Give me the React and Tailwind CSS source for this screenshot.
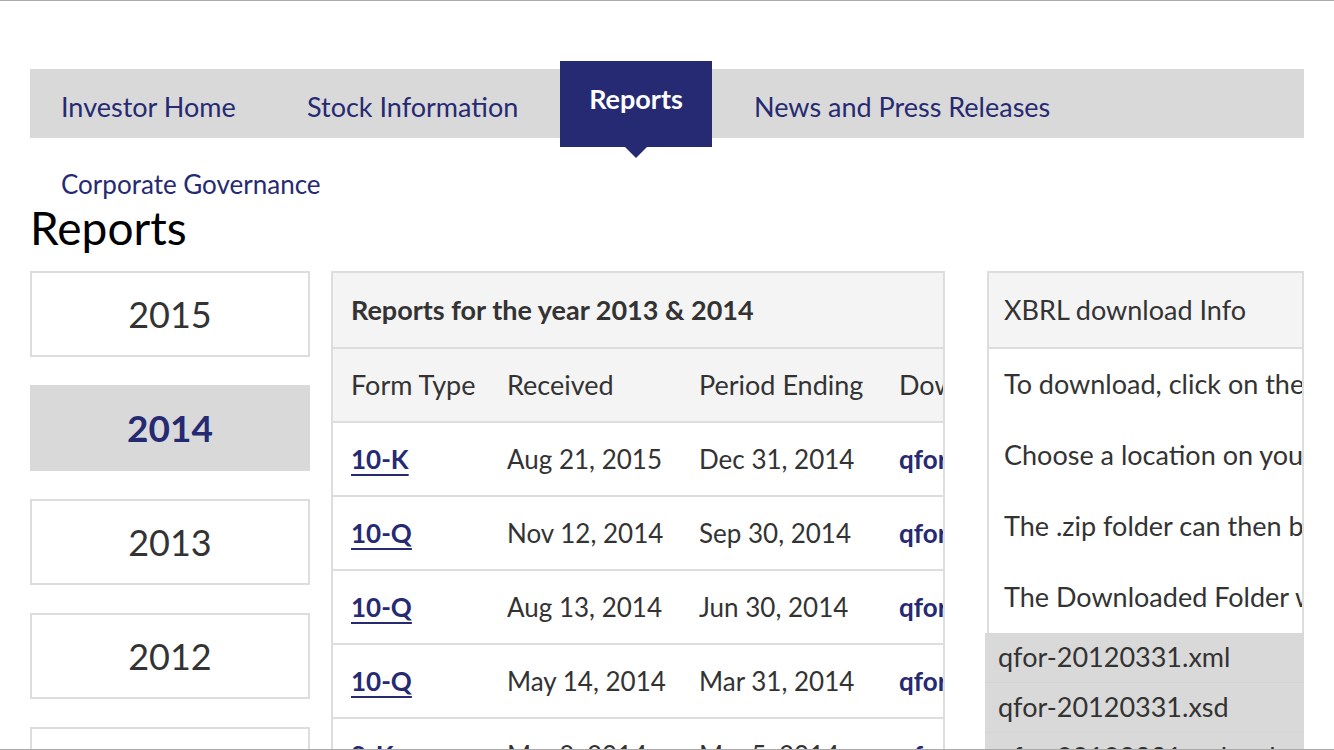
export default function App() {
  const years = ["2015", "2014", "2013", "2012", "2011"];
  const rows = [
    ["10-K", "Aug 21, 2015", "Dec 31, 2014", "qform10k.pdf"],
    ["10-Q", "Nov 12, 2014", "Sep 30, 2014", "qform10q.pdf"],
    ["10-Q", "Aug 13, 2014", "Jun 30, 2014", "qform10q.pdf"],
    ["10-Q", "May 14, 2014", "Mar 31, 2014", "qform10q.pdf"],
    ["8-K", "Mar 8, 2014", "Mar 5, 2014", "qform8k.pdf"],
  ];
  const info = [
    "To download, click on the file name.",
    "Choose a location on your computer.",
    "The .zip folder can then be extracted.",
    "The Downloaded Folder will contain:",
  ];
  const files = ["qfor-20120331.xml", "qfor-20120331.xsd", "qfor-20120331_cal.xml"];

  return (
    <div className="w-[1334px] h-[750px] overflow-hidden bg-white border-t border-b border-[#aaaaaa] text-[#333333] font-['Lato',sans-serif]">
      <div className="px-[30px]">
        {/* nav */}
        <div className="mt-[68px] h-[69px] bg-[#d9d9d9] flex items-start">
          <div className="w-[246px] pl-[31px] pt-[7px] h-[69px] flex items-center text-[27px] text-[#262a72] whitespace-nowrap">
            Investor Home
          </div>
          <div className="w-[284px] pl-[31px] pt-[7px] h-[69px] flex items-center text-[27px] text-[#262a72] whitespace-nowrap">
            Stock Information
          </div>
          <div className="relative -mt-[8px] w-[152px] h-[86px] bg-[#262a72] flex items-center justify-center pb-[10px] text-[27px] font-bold text-white">
            Reports
            <div className="absolute left-[65px] -bottom-[11px] w-0 h-0 border-l-[11px] border-r-[11px] border-t-[11px] border-l-transparent border-r-transparent border-t-[#262a72]"></div>
          </div>
          <div className="pl-[42px] pt-[7px] h-[69px] flex items-center text-[27px] text-[#262a72] whitespace-nowrap">
            News and Press Releases
          </div>
        </div>

        <div className="mt-[31px] pl-[31px] h-[30px] leading-[30px] text-[26px] text-[#262a72]">
          Corporate Governance
        </div>
        <h1 className="mt-[5px] h-[48px] leading-[48px] text-[46px] text-black">Reports</h1>

        <div className="mt-[19px] flex items-start">
          {/* years */}
          <div className="w-[280px] flex flex-col gap-[28px]">
            {years.map((y) =>
              y === "2014" ? (
                <div key={y} className="h-[86px] bg-[#d9d9d9] flex items-center justify-center text-[37px] font-bold text-[#262a72]">
                  {y}
                </div>
              ) : (
                <div key={y} className="h-[86px] border-2 border-[#dddddd] flex items-center justify-center text-[36px] text-[#333333]">
                  {y}
                </div>
              )
            )}
          </div>

          {/* reports table */}
          <div className="ml-[21px] w-[614px] border-l-2 border-t-2 border-r-2 border-[#dddddd] overflow-hidden">
            <div className="h-[76px] bg-[#f4f4f4] border-b-2 border-[#dddddd] pl-[18px] flex items-center text-[27px] font-bold whitespace-nowrap">
              Reports for the year 2013 &amp; 2014
            </div>
            <div className="h-[74px] bg-[#f4f4f4] border-b-2 border-[#dddddd] pl-[18px] flex items-center text-[27px] whitespace-nowrap">
              <div className="w-[156px] shrink-0">Form Type</div>
              <div className="w-[192px] shrink-0">Received</div>
              <div className="w-[200px] shrink-0">Period Ending</div>
              <div className="shrink-0">Download</div>
            </div>
            {rows.map((r, i) => (
              <div key={i} className="h-[74px] border-b-2 border-[#dddddd] pl-[18px] flex items-center text-[26px] whitespace-nowrap">
                <div className="w-[156px] shrink-0 font-bold text-[#262a72] underline underline-offset-[5px] decoration-2">{r[0]}</div>
                <div className="w-[192px] shrink-0">{r[1]}</div>
                <div className="w-[200px] shrink-0">{r[2]}</div>
                <div className="shrink-0 font-bold text-[#262a72]">{r[3]}</div>
              </div>
            ))}
          </div>

          {/* xbrl info */}
          <div className="ml-[40px] w-[319px]">
            <div className="ml-[2px] border-l-2 border-t-2 border-r-2 border-[#dddddd] overflow-hidden">
              <div className="h-[76px] bg-[#f4f4f4] border-b-2 border-[#dddddd] pl-[15px] flex items-center text-[27px] whitespace-nowrap">
                XBRL download Info
              </div>
              {info.map((t, i) => (
                <div key={i} className="h-[71px] pl-[15px] flex items-center text-[27px] whitespace-nowrap">
                  {t}
                </div>
              ))}
            </div>
            <div className="bg-[#d9d9d9] overflow-hidden">
              {files.map((f, i) => (
                <div key={i} className="h-[50px] pl-[13px] flex items-center text-[27px] whitespace-nowrap border-b border-[#d4d4d4]">
                  {f}
                </div>
              ))}
            </div>
          </div>
        </div>
      </div>
    </div>
  );
}
